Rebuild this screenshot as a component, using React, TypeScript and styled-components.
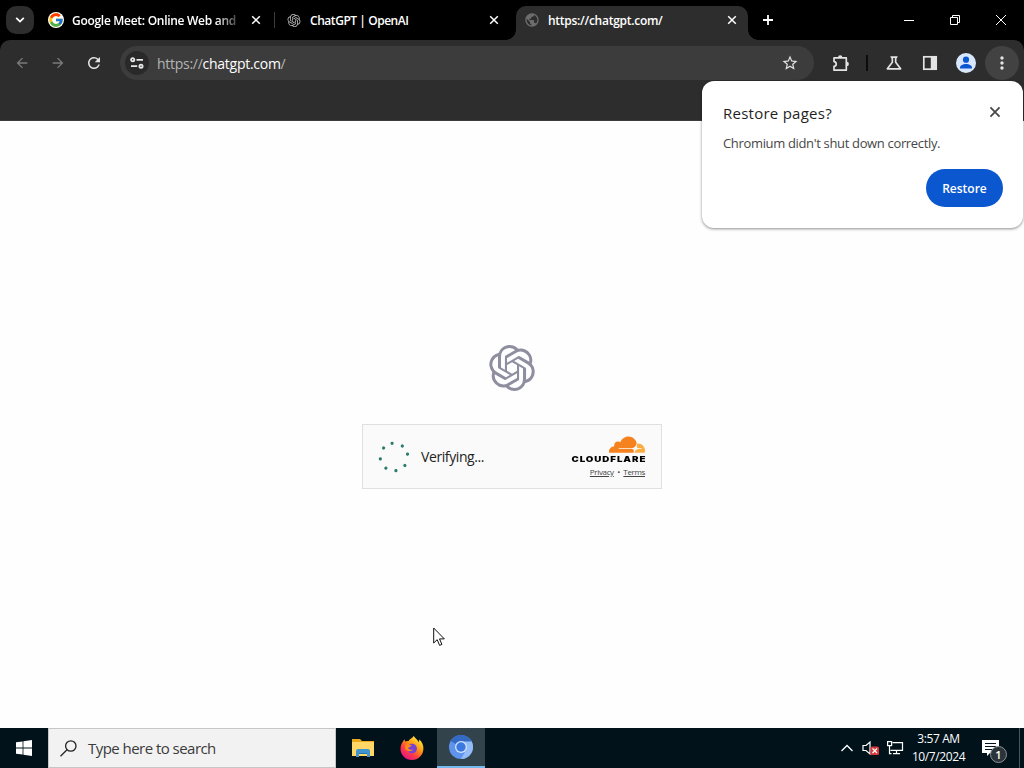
import React from "react";
import styled, { createGlobalStyle } from "styled-components";
import { FcGoogle } from "react-icons/fc";
import { SiOpenai } from "react-icons/si";
import {
  MdArrowBack,
  MdArrowForward,
  MdMoreVert,
  MdOutlineScience,
  MdPublic,
  MdRefresh,
  MdStarBorder,
} from "react-icons/md";

const GlobalStyle = createGlobalStyle`
  * {
    box-sizing: border-box;
  }
  body {
    margin: 0;
    overflow: hidden;
    font-family: "Open Sans", "Noto Sans", sans-serif;
  }
`;

const Screen = styled.div`
  position: relative;
  width: 1024px;
  height: 768px;
  display: flex;
  flex-direction: column;
  background: #fefefe;
`;

const TabStrip = styled.div`
  display: flex;
  height: 40px;
  background: #000;
  color: #fff;
`;

const TabSearch = styled.button`
  display: flex;
  align-items: center;
  justify-content: center;
  width: 28px;
  height: 28px;
  margin: 6px 6px 0;
  padding: 0;
  border: none;
  border-radius: 10px;
  background: #2d2d2d;
  color: #fff;
`;

const Tab = styled.div<{ $active?: boolean }>`
  position: relative;
  display: flex;
  align-items: center;
  gap: 8px;
  width: ${(p) => (p.$active ? 232 : 238)}px;
  height: ${(p) => (p.$active ? 34 : 28)}px;
  margin-top: 6px;
  padding: 0 ${(p) => (p.$active ? 11 : 17)}px ${(p) => (p.$active ? 6 : 0)}px 8px;
  border-radius: 10px 10px 0 0;
  background: ${(p) => (p.$active ? "#2d2d2d" : "transparent")};

  &::before,
  &::after {
    content: "";
    display: ${(p) => (p.$active ? "block" : "none")};
    position: absolute;
    bottom: 0;
    width: 10px;
    height: 10px;
  }
  &::before {
    left: -10px;
    background: radial-gradient(circle at 0 0, transparent 9.5px, #2d2d2d 10px);
  }
  &::after {
    right: -10px;
    background: radial-gradient(circle at 100% 0, transparent 9.5px, #2d2d2d 10px);
  }
`;

const TabTitle = styled.span<{ $spacing: number; $fade?: boolean }>`
  flex: 1;
  overflow: hidden;
  white-space: nowrap;
  padding-top: 1px;
  font-size: 12px;
  font-weight: 600;
  line-height: 16px;
  letter-spacing: ${(p) => p.$spacing}px;
  mask-image: ${(p) =>
    p.$fade ? "linear-gradient(90deg, #000 144px, transparent 172px)" : "none"};
`;

const TabDivider = styled.i`
  width: 1px;
  height: 16px;
  margin: 12px -1px 0 0;
  background: #3c3c3c;
  transform: translateX(-4px);
`;

const NewTab = styled.div`
  display: flex;
  align-items: center;
  justify-content: center;
  width: 40px;
  height: 40px;
`;

const WindowControls = styled.div`
  display: flex;
  margin-left: auto;
`;

const WindowButton = styled.span`
  display: flex;
  align-items: center;
  justify-content: center;
  width: 46px;
  height: 40px;
`;

const ToolbarBack = styled.div`
  background: #000;
`;

const Toolbar = styled.div`
  display: flex;
  align-items: center;
  height: 41px;
  padding: 5px 5px 0 4px;
  border-radius: 10px 10px 0 0;
  background: #2d2d2d;
  color: #e3e3e3;
`;

const ToolButton = styled.span<{ $dim?: boolean; $round?: boolean }>`
  display: flex;
  align-items: center;
  justify-content: center;
  width: ${(p) => (p.$round ? 34 : 36)}px;
  height: 34px;
  margin-left: ${(p) => (p.$round ? "auto" : 0)};
  border-radius: 17px;
  color: ${(p) => (p.$dim ? "#7b7b7b" : "#e3e3e3")};
  background: ${(p) => (p.$round ? "#424242" : "transparent")};
`;

const Omnibox = styled.div`
  display: flex;
  align-items: center;
  width: 694px;
  height: 34px;
  margin: 0 9px 0 8px;
  padding: 0 15px 0 5px;
  border-radius: 17px;
  background: #3c3c3c;
`;

const SiteChip = styled.span`
  display: flex;
  align-items: center;
  justify-content: center;
  width: 24px;
  height: 24px;
  border-radius: 50%;
  background: #292929;
`;

const Url = styled.span`
  flex: 1;
  margin-left: 8px;
  font-size: 14px;
  letter-spacing: -0.27px;
  color: #b4b4b4;

  b {
    font-weight: 400;
    color: #fff;
  }
`;

const ToolDivider = styled.i`
  width: 2px;
  height: 16px;
  margin: 0 8px 0 7px;
  background: #0c0c0c;
`;

const BookmarkBar = styled.div`
  height: 40px;
  background: #2d2d2d;
  border-bottom: 1px solid #3c3c3c;
`;

const Page = styled.main`
  flex: 1;
  display: flex;
  flex-direction: column;
  align-items: center;
  padding-top: 224px;
  color: #8e8ea0;
`;

const Challenge = styled.section`
  display: flex;
  align-items: center;
  width: 300px;
  height: 65px;
  margin-top: 33px;
  padding: 0 16px 0 15px;
  border: 1px solid #e0e0e0;
  background: #fafafa;
`;

const Verifying = styled.span`
  flex: 1;
  margin-left: 11px;
  font-size: 14px;
  letter-spacing: -0.4px;
  color: #232323;
`;

const Branding = styled.div`
  display: flex;
  flex-direction: column;
  align-items: flex-end;
  color: #000;
`;

const Wordmark = styled.span`
  font-family: Inter, sans-serif;
  font-size: 8px;
  font-weight: 900;
  line-height: 9px;
  letter-spacing: 0.75px;
  margin: 2px -1px 0 0;
  transform: scaleX(1.22);
  transform-origin: right;
`;

const Legal = styled.span`
  margin-top: 3px;
  font-size: 8px;
  line-height: 10px;
  letter-spacing: -0.35px;
  color: #444;
  white-space: pre;
`;

const Bubble = styled.aside`
  position: absolute;
  top: 81px;
  right: 1px;
  display: flex;
  flex-direction: column;
  width: 321px;
  height: 147px;
  padding: 20px 20px 21px 21px;
  border-radius: 12px;
  background: #fff;
  box-shadow: 0 1px 3px rgba(0, 0, 0, 0.45);
  color: #1f1f1f;
`;

const BubbleHeader = styled.div`
  display: flex;
  align-items: center;
  justify-content: space-between;
  height: 24px;
  font-size: 15px;
  line-height: 23px;
  letter-spacing: 0.25px;
  color: #1f1f1f;

  svg {
    margin: 0 2px 3px 0;
    color: #474747;
  }
`;

const BubbleText = styled.p`
  margin: 8px 0 0;
  font-size: 13px;
  line-height: 20px;
  letter-spacing: -0.34px;
  color: #474747;
`;

const RestoreButton = styled.button`
  align-self: flex-end;
  width: 77px;
  height: 38px;
  margin-top: 16px;
  padding: 0;
  border: none;
  border-radius: 19px;
  background: #0b57d0;
  color: #fff;
  font: 600 12px "Open Sans", sans-serif;
`;

const Taskbar = styled.footer`
  display: flex;
  height: 40px;
  background: #01121b;
  color: #fff;
`;

const TaskButton = styled.div<{ $width: number; $active?: boolean }>`
  display: flex;
  align-items: center;
  justify-content: center;
  width: ${(p) => p.$width}px;
  background: ${(p) => (p.$active ? "#33434b" : "transparent")};
  border-bottom: ${(p) => (p.$active ? "2px solid #76b9ed" : "none")};
`;

const PinnedApps = styled.div`
  display: flex;
  width: 101px;
  padding-left: 2px;
`;

const SearchBox = styled.div`
  display: flex;
  align-items: center;
  gap: 11px;
  width: 288px;
  padding-left: 11px;
  border: 1px solid #c4c6c7;
  background: #f2f2f2;
  color: #3b3b3b;
  font-size: 15px;
  letter-spacing: -0.54px;
`;

const Tray = styled.div`
  display: flex;
  align-items: center;
  margin-left: auto;
`;

const TrayIcon = styled.span`
  display: flex;
  justify-content: center;
  width: 24px;
`;

const Clock = styled.div`
  width: 63px;
  font-size: 12px;
  line-height: 18px;
  letter-spacing: -0.4px;
  text-align: center;
`;

const Notifications = styled.span`
  position: relative;
  display: flex;
  width: 49px;
  height: 40px;
  padding: 11px 0 0 12px;
`;

const Badge = styled.span`
  position: absolute;
  top: 18px;
  left: 20px;
  width: 17px;
  height: 17px;
  border: 1px solid #8a9296;
  border-radius: 50%;
  background: #2b3539;
  font-size: 11px;
  font-weight: 600;
  line-height: 15px;
  text-align: center;
`;

const Pointer = styled.svg`
  position: absolute;
  left: 433px;
  top: 627px;
`;

const CloseIcon = ({ size = 10 }: { size?: number }) => (
  <svg width={size} height={size} viewBox="0 0 10 10" fill="none" stroke="currentColor" strokeWidth="1.5">
    <path d="m1.2 1.2 7.6 7.6M8.8 1.2 1.2 8.8" />
  </svg>
);

const ChevronIcon = () => (
  <svg width="10" height="8" viewBox="0 0 10 8" fill="none" stroke="currentColor" strokeWidth="1.8">
    <path d="m1.2 1.8 3.8 3.8 3.8-3.8" />
  </svg>
);

const PlusIcon = () => (
  <svg width="12" height="12" viewBox="0 0 12 12" stroke="currentColor" strokeWidth="1.8">
    <path d="M6 1v10M1 6h10" />
  </svg>
);

const SiteSettingsIcon = () => (
  <svg width="14" height="12" viewBox="0 0 14 12" fill="none" stroke="#e8e8e8" strokeWidth="1.8">
    <circle cx="2.7" cy="2.8" r="1.6" />
    <path d="M6.5 2.8H13M1 9.2h6.2" />
    <circle cx="11" cy="9.2" r="1.6" />
  </svg>
);

const ExtensionIcon = () => (
  <svg width="18" height="18" viewBox="0 0 18 18">
    <path
      d="M2 3.8h12.3v12.4H2v-3.8c3-.2 3-4.6 0-4.8z"
      fill="none"
      stroke="#e3e3e3"
      strokeWidth="1.7"
      strokeLinejoin="round"
    />
    <path d="M6 3.5a2.2 2.2 0 0 1 4.4 0zM14.7 7.8a2.2 2.2 0 0 1 0 4.4z" fill="#e3e3e3" />
  </svg>
);

const SidePanelIcon = () => (
  <svg width="16" height="16" viewBox="0 0 16 16">
    <rect x="1.8" y="1.8" width="12.4" height="12.4" fill="none" stroke="#e3e3e3" strokeWidth="1.7" />
    <rect x="8.8" y="1.5" width="6" height="13" fill="#e3e3e3" />
  </svg>
);

const AvatarIcon = () => (
  <svg width="20" height="20" viewBox="0 0 20 20">
    <circle cx="10" cy="10" r="10" fill="#d9e7fd" />
    <circle cx="10" cy="6.7" r="3.1" fill="#0b57d0" />
    <path d="M4 14.7c0-2.3 3.3-3.6 6-3.6s6 1.3 6 3.6v.8H4z" fill="#0b57d0" />
  </svg>
);

const dots = [352, 37, 78, 128, 172, 216, 262, 311];

const Spinner = () => (
  <svg width="32" height="32" viewBox="-16 -16 32 32" fill="#2b7a6a">
    {dots.map((deg) => (
      <circle key={deg} r="1.6" cy="-13.8" transform={`rotate(${deg})`} />
    ))}
  </svg>
);

const CloudIcon = () => (
  <svg width="36" height="17" viewBox="0 6.3 24 11.3">
    <path
      fill="#f6821f"
      d="M16.5088 16.8447c.1475-.5068.0908-.9707-.1553-1.3154-.2246-.3164-.6045-.499-1.0615-.5205l-8.6592-.1123a.1559.1559 0 0 1-.1333-.0713c-.0283-.042-.0351-.0986-.021-.1553.0278-.084.1123-.1484.2036-.1562l8.7359-.1123c1.0351-.0489 2.1601-.8868 2.5537-1.9136l.499-1.3013c.0215-.0561.0293-.1128.0147-.168-.5625-2.5463-2.835-4.4453-5.5499-4.4453-2.5039 0-4.6284 1.6177-5.3876 3.8614-.4927-.3658-1.1187-.5625-1.794-.499-1.2026.119-2.1665 1.083-2.2861 2.2856-.0283.31-.0069.6128.0635.894C1.5683 13.171 0 14.7754 0 16.752c0 .1748.0142.3515.0352.5273.0141.083.0844.1475.1689.1475h15.9814c.0909 0 .1758-.0645.2032-.1553z"
    />
    <path
      fill="#fbad41"
      d="M19.2656 11.2813c-.0771 0-.1611 0-.2383.0112-.0566 0-.1054.0415-.127.0976l-.3378 1.1744c-.1475.5068-.0918.9707.1543 1.3164.2256.3164.6055.498 1.0625.5195l1.8437.1133c.0557 0 .1055.0263.1329.0703.0283.043.0351.1074.0214.1562-.0283.084-.1132.1485-.204.1553l-1.921.1123c-1.041.0488-2.1582.8867-2.5527 1.914l-.1406.3585c-.0283.0713.0215.1416.0986.1416h6.5977c.0771 0 .1474-.0489.169-.126.1122-.4082.1757-.837.1757-1.2803 0-2.6025-2.125-4.727-4.7344-4.727"
    />
  </svg>
);

const WindowsIcon = () => (
  <svg width="16" height="16" viewBox="0 0 16 16" fill="#fff">
    <path d="M0 2.3 6.6 1.4v6.1H0zM7.4 1.3 16 0v7.5H7.4zM0 8.4h6.6v6.2L0 13.7zM7.4 8.4H16V16l-8.6-1.3z" />
  </svg>
);

const ExplorerIcon = () => (
  <svg width="22" height="18" viewBox="0 0 22 18">
    <path d="M0 0h8l2 2h12v15H0z" fill="#e8a91c" />
    <path d="M0 3h22v14H0z" fill="#ffd766" />
    <path d="M4 18v-6q0-2 2-2h10q2 0 2 2v6h-3v-4H7v4z" fill="#3f95cf" />
    <path d="M7 14h8v1H7z" fill="#2376a7" />
  </svg>
);

const FirefoxIcon = () => (
  <svg width="24" height="24" viewBox="0 0 24 24">
    <defs>
      <linearGradient id="fox" x1="0.85" y1="0.05" x2="0.2" y2="0.95">
        <stop offset="0" stopColor="#fff04a" />
        <stop offset="0.4" stopColor="#ff980e" />
        <stop offset="0.7" stopColor="#ff3b47" />
        <stop offset="1" stopColor="#e31587" />
      </linearGradient>
    </defs>
    <path
      d="M3 5.5c.4-.9 1-1.7 1.5-2.2 0 .9.3 1.7.8 2.2 1-.6 2-.7 3.2-.5C10.4 2.2 12.5 2 13.8 0c1.1 2.4 4.1 3.5 4.9 6.2l.7-2.6c2.7 2.6 4.2 5.5 4 9.4-.3 6.3-5.2 11-11.4 11C5.5 24 .5 19 .5 12.7.5 9.9 1.5 7.5 3 5.5z"
      fill="url(#fox)"
    />
    <path
      d="M8 9.5C9.7 7.4 14 7 16 9.7c2 2.9.7 7.5-3.7 7.6-3.5.1-5.7-2.8-5-5.6z"
      fill="#7542d5"
    />
    <path
      d="M5.3 9c2.3-1.3 4.5-.6 6.8 1.1-1.7.2-2.3 1.5-4.2 1.7.8 1.9 3 2.3 5.5 1.8-2.5 3-7.2 1.7-8.3-1.2z"
      fill="#ff8a16"
    />
  </svg>
);

const ChromiumIcon = () => (
  <svg width="24" height="24" viewBox="0 0 24 24">
    <circle cx="12" cy="12" r="12" fill="#5f94ec" />
    <path d="M12 12 1.6 6A12 12 0 0 1 22.4 6z" fill="#356ac3" />
    <path d="M12 6.5h10.7A12 12 0 0 1 12 24l5-9z" fill="#94bcf8" />
    <circle cx="12" cy="12" r="6" fill="#d5e4fc" />
    <circle cx="12" cy="12" r="4.7" fill="#3b78e0" />
  </svg>
);

const VolumeIcon = () => (
  <svg width="18" height="16" viewBox="0 0 18 16">
    <path d="M1 5.5h3l4-3.5v12l-4-3.5H1z" fill="none" stroke="#fff" strokeWidth="1.2" />
    <rect x="8.5" y="6.5" width="8.5" height="8.5" rx="1.5" fill="#d9363b" />
    <path d="m10.5 8.5 4.5 4.5m0-4.5-4.5 4.5" stroke="#fff" strokeWidth="1.3" />
  </svg>
);

const NetworkIcon = () => (
  <svg width="18" height="16" viewBox="0 0 18 16" fill="none" stroke="#fff" strokeWidth="1.2">
    <path d="M6.5 2.6h10v7.8H4.5M10.5 10.4v3.2M7 13.6h7M3.5 6v7.6h2" />
    <rect x="1.6" y="1.6" width="4" height="4" />
  </svg>
);

const App: React.FC = () => {
  return (
    <>
      <GlobalStyle />
      <Screen>
        <TabStrip>
          <TabSearch>
            <ChevronIcon />
          </TabSearch>
          <Tab>
            <FcGoogle size={16} style={{ background: "#fff", borderRadius: 8 }} />
            <TabTitle $spacing={-0.29} $fade>
              Google Meet: Online Web and
            </TabTitle>
            <CloseIcon />
          </Tab>
          <TabDivider />
          <Tab>
            <SiOpenai size={13} color="#b5b5b5" style={{ width: 16 }} />
            <TabTitle $spacing={-0.45}>ChatGPT | OpenAI</TabTitle>
            <CloseIcon />
          </Tab>
          <Tab $active>
            <MdPublic size={16} color="#6d6d6d" />
            <TabTitle $spacing={-0.27}>https://chatgpt.com/</TabTitle>
            <CloseIcon />
          </Tab>
          <NewTab>
            <PlusIcon />
          </NewTab>
          <WindowControls>
            <WindowButton>
              <svg width="10" height="10">
                <path d="M0 5.5h10" stroke="#fff" />
              </svg>
            </WindowButton>
            <WindowButton>
              <svg width="10" height="10" fill="none" stroke="#fff">
                <path d="M.5 2.5h7v7h-7zM2.5 2.5v-2h7v7h-2" />
              </svg>
            </WindowButton>
            <WindowButton>
              <svg width="10" height="10" stroke="#fff">
                <path d="m0 0 10 10M10 0 0 10" />
              </svg>
            </WindowButton>
          </WindowControls>
        </TabStrip>
        <ToolbarBack>
          <Toolbar>
            <ToolButton $dim>
              <MdArrowBack size={16} />
            </ToolButton>
            <ToolButton $dim>
              <MdArrowForward size={16} />
            </ToolButton>
            <ToolButton>
              <MdRefresh size={18} />
            </ToolButton>
            <Omnibox>
              <SiteChip>
                <SiteSettingsIcon />
              </SiteChip>
              <Url>
                https://<b>chatgpt.com</b>/
              </Url>
              <MdStarBorder size={18} />
            </Omnibox>
            <ToolButton>
              <ExtensionIcon />
            </ToolButton>
            <ToolDivider />
            <ToolButton>
              <MdOutlineScience size={20} />
            </ToolButton>
            <ToolButton>
              <SidePanelIcon />
            </ToolButton>
            <ToolButton>
              <AvatarIcon />
            </ToolButton>
            <ToolButton $round>
              <MdMoreVert size={20} />
            </ToolButton>
          </Toolbar>
        </ToolbarBack>
        <BookmarkBar />
        <Page>
          <SiOpenai size={46} />
          <Challenge>
            <Spinner />
            <Verifying>Verifying...</Verifying>
            <Branding>
              <CloudIcon />
              <Wordmark>CLOUDFLARE</Wordmark>
              <Legal>
                <u>Privacy</u>  •  <u>Terms</u>
              </Legal>
            </Branding>
          </Challenge>
        </Page>
        <Taskbar>
          <TaskButton $width={48}>
            <WindowsIcon />
          </TaskButton>
          <SearchBox>
            <svg width="17" height="17" viewBox="0 0 17 17" fill="none" stroke="#222" strokeWidth="1.3">
              <circle cx="10.8" cy="6" r="5.2" />
              <path d="M7 9.8.5 16.3" />
            </svg>
            Type here to search
          </SearchBox>
          <PinnedApps>
            <TaskButton $width={50}>
              <ExplorerIcon />
            </TaskButton>
            <TaskButton $width={48}>
              <FirefoxIcon />
            </TaskButton>
          </PinnedApps>
          <TaskButton $width={48} $active>
            <ChromiumIcon />
          </TaskButton>
          <Tray>
            <TrayIcon>
              <svg width="12" height="8" fill="none" stroke="#fff" strokeWidth="1.3">
                <path d="m.5 7 5.5-5.5L11.5 7" />
              </svg>
            </TrayIcon>
            <TrayIcon>
              <VolumeIcon />
            </TrayIcon>
            <TrayIcon>
              <NetworkIcon />
            </TrayIcon>
            <Clock>
              3:57 AM
              <br />
              10/7/2024
            </Clock>
            <Notifications>
              <svg width="18" height="17" viewBox="0 0 18 17">
                <path d="M0 1h17v13H8l-3 3v-3H0z" fill="#fff" />
                <path d="M3 4.5h11M3 7.5h11M3 10.5h7" stroke="#01121b" />
              </svg>
              <Badge>1</Badge>
            </Notifications>
            <svg width="5" height="40">
              <path d="M.5 0v40" stroke="#4a565d" />
            </svg>
          </Tray>
        </Taskbar>
        <Bubble>
          <BubbleHeader>
            Restore pages?
            <CloseIcon size={12} />
          </BubbleHeader>
          <BubbleText>Chromium didn't shut down correctly.</BubbleText>
          <RestoreButton>Restore</RestoreButton>
        </Bubble>
        <Pointer width="13" height="20" viewBox="0 0 13 20">
          <path
            d="M.7 1v15l3.5-3.3 2.4 5.7 2.3-1-2.4-5.5h4.8z"
            fill="#fff"
            stroke="#111"
            strokeWidth="1"
          />
        </Pointer>
      </Screen>
    </>
  );
};

export default App;
